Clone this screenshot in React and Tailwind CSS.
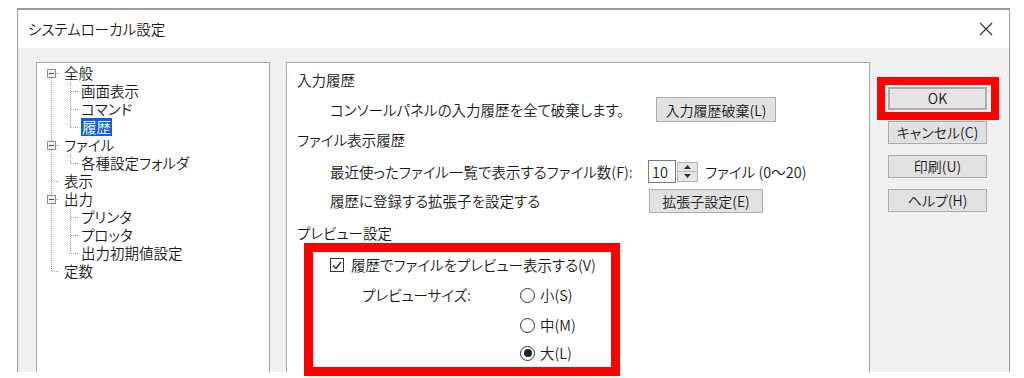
import React from 'react';

const font = "font-['Noto_Sans_CJK_JP',sans-serif] font-[350] [font-feature-settings:'palt']";

const RootCell = ({ type }) => {
  const dot = { stroke: '#a0a0a0', strokeWidth: 1, strokeDasharray: '1 1', shapeRendering: 'crispEdges' };
  const box = type === 'expFirst' || type === 'expMid';
  return (
    <svg width="18" height="18" className="shrink-0">
      {type === 'expMid' && <line x1="9.5" y1="0" x2="9.5" y2="5" {...dot} />}
      {box && <line x1="9.5" y1="14" x2="9.5" y2="18" {...dot} />}
      {box && <line x1="14" y1="9.5" x2="18" y2="9.5" {...dot} />}
      {box && <rect x="5.5" y="5.5" width="8" height="8" fill="#f4f4f4" stroke="#8e8e8e" shapeRendering="crispEdges" />}
      {box && <line x1="7" y1="9.5" x2="12" y2="9.5" stroke="#3b4a5c" shapeRendering="crispEdges" />}
      {(type === 'pass' || type === 'leafMid') && <line x1="9.5" y1="0" x2="9.5" y2="18" {...dot} />}
      {type === 'leafLast' && <line x1="9.5" y1="0" x2="9.5" y2="9.5" {...dot} />}
      {(type === 'leafMid' || type === 'leafLast') && <line x1="10" y1="9.5" x2="18" y2="9.5" {...dot} />}
    </svg>
  );
};

const ChildCell = ({ last }) => {
  const dot = { stroke: '#a0a0a0', strokeWidth: 1, strokeDasharray: '1 1', shapeRendering: 'crispEdges' };
  return (
    <svg width="20" height="18" className="shrink-0">
      <line x1="10.5" y1="0" x2="10.5" y2={last ? 9.5 : 18} {...dot} />
      <line x1="11" y1="9.5" x2="19" y2="9.5" {...dot} />
    </svg>
  );
};

const treeRows = [
  { a: 'expFirst', label: '全般' },
  { a: 'pass', b: 'mid', label: '画面表示' },
  { a: 'pass', b: 'mid', label: 'コマンド' },
  { a: 'pass', b: 'last', label: '履歴', selected: true },
  { a: 'expMid', label: 'ファイル' },
  { a: 'pass', b: 'last', label: '各種設定フォルダ' },
  { a: 'leafMid', label: '表示' },
  { a: 'expMid', label: '出力' },
  { a: 'pass', b: 'mid', label: 'プリンタ' },
  { a: 'pass', b: 'mid', label: 'プロッタ' },
  { a: 'pass', b: 'last', label: '出力初期値設定' },
  { a: 'leafLast', label: '定数' },
];

const WinButton = ({ children, className = '' }) => (
  <div className={`flex items-center justify-center bg-[#e1e1e1] border border-[#adadad] text-[14px] text-[#1a1a1a] ${className}`}>
    {children}
  </div>
);

const Radio = ({ checked, label }) => (
  <div className="flex items-center gap-[5px]">
    <div className="w-[15px] h-[15px] rounded-full border border-[#333] bg-white flex items-center justify-center">
      {checked && <div className="w-[8px] h-[8px] rounded-full bg-[#222]" />}
    </div>
    <span>{label}</span>
  </div>
);

export default function App() {
  return (
    <div className={`w-[1024px] h-[378px] bg-white overflow-hidden pt-[8px] pl-[17px] text-[#1a1a1a] ${font}`}>
      <div className="w-[993px] h-[364px] border border-b-0 border-[#9c9c9c] border-t-2 bg-[#f0f0f0] flex flex-col">
        {/* title bar */}
        <div className="h-[38px] bg-white flex items-center justify-between pl-[10px] pr-[16px] shrink-0">
          <span className="text-[14.5px]">システムローカル設定</span>
          <svg width="14" height="14" viewBox="0 0 14 14">
            <path d="M1 1 L13 13 M13 1 L1 13" stroke="#333" strokeWidth="1.2" />
          </svg>
        </div>

        {/* body */}
        <div className="flex pl-[18px] pt-[14px]">
          {/* tree */}
          <div className="w-[234px] h-[310px] bg-white border border-[#a6a6a6] border-b-0 pt-[1px] pl-[5px] text-[14.5px]">
            {treeRows.map((r, i) => (
              <div key={i} className="h-[18px] flex items-center leading-[18px]">
                <RootCell type={r.a} />
                {r.b && <ChildCell last={r.b === 'last'} />}
                <span
                  className={`${r.b ? 'ml-[1px]' : 'ml-[4px]'} whitespace-nowrap ${
                    r.selected ? 'bg-[#0a64d2] text-white px-[1px]' : ''
                  }`}
                >
                  {r.label}
                </span>
              </div>
            ))}
          </div>

          {/* settings panel */}
          <div className="ml-[16px] w-[584px] h-[310px] bg-white border border-[#a6a6a6] border-b-0 text-[14.5px] leading-[20px]">
            <div className="mt-[7px] pl-[10px] h-[20px]">入力履歴</div>
            <div className="mt-[7px] pl-[43px] h-[25px] flex items-center">
              <span className="w-[326px] whitespace-nowrap">コンソールパネルの入力履歴を全て破棄します。</span>
              <WinButton className="w-[120px] h-[25px]">入力履歴破棄(L)</WinButton>
            </div>
            <div className="mt-[8px] pl-[10px] h-[20px]">ファイル表示履歴</div>
            <div className="mt-[10px] pl-[43px] h-[23px] flex items-center">
              <span className="w-[318px] whitespace-nowrap">最近使ったファイル一覧で表示するファイル数(F):</span>
              <div className="w-[28px] h-[23px] border border-[#7a7a7a] bg-white flex items-center pl-[3px]">10</div>
              <div className="w-[21px] h-[20px] flex flex-col ml-[1px] border border-[#b5b5b5]">
                <div className="flex-1 bg-[#e6e6e6] flex items-center justify-center border-b border-[#b5b5b5]">
                  <svg width="7" height="4"><path d="M0 4 L3.5 0 L7 4 Z" fill="#333" /></svg>
                </div>
                <div className="flex-1 bg-[#e6e6e6] flex items-center justify-center">
                  <svg width="7" height="4"><path d="M0 0 L3.5 4 L7 0 Z" fill="#333" /></svg>
                </div>
              </div>
              <span className="ml-[7px] whitespace-nowrap">ファイル (0〜20)</span>
            </div>
            <div className="mt-[6px] pl-[43px] h-[24px] flex items-center">
              <span className="w-[319px] whitespace-nowrap">履歴に登録する拡張子を設定する</span>
              <WinButton className="w-[114px] h-[24px]">拡張子設定(E)</WinButton>
            </div>
            <div className="mt-[10px] pl-[10px] h-[20px]">プレビュー設定</div>

            {/* red annotation frame */}
            <div className="ml-[17px] w-[316px] border-[9px] border-[#f00] pt-[3px] pb-[4px]">
              <div className="pl-[17px] h-[20px] flex items-center gap-[7px]">
                <div className="w-[14px] h-[14px] border border-[#333] bg-white flex items-center justify-center">
                  <svg width="10" height="9" viewBox="0 0 10 9">
                    <path d="M1 4.5 L4 7.5 L9 1" fill="none" stroke="#222" strokeWidth="1.3" />
                  </svg>
                </div>
                <span className="whitespace-nowrap">履歴でファイルをプレビュー表示する(V)</span>
              </div>
              <div className="mt-[10px] pl-[49px] h-[20px] flex items-center">
                <span className="w-[158px] whitespace-nowrap">プレビューサイズ:</span>
                <Radio label="小(S)" />
              </div>
              <div className="mt-[10px] pl-[207px] h-[20px] flex items-center">
                <Radio label="中(M)" />
              </div>
              <div className="mt-[8px] pl-[207px] h-[20px] flex items-center">
                <Radio checked label="大(L)" />
              </div>
            </div>
          </div>

          {/* buttons */}
          <div className="ml-[18px] pt-[25px] flex flex-col gap-[11px]">
            <div className="relative">
              <WinButton className="w-[99px] h-[23px] border-2 border-[#0078d7] bg-[#e5e5e5]">OK</WinButton>
              <div className="absolute left-[-11px] top-[-10px] right-[-12px] bottom-[-10px] border-[8px] border-[#f00]" />
            </div>
            <WinButton className="w-[99px] h-[23px]">キャンセル(C)</WinButton>
            <WinButton className="w-[99px] h-[23px]">印刷(U)</WinButton>
            <WinButton className="w-[99px] h-[23px]">ヘルプ(H)</WinButton>
          </div>
        </div>
      </div>
    </div>
  );
}
